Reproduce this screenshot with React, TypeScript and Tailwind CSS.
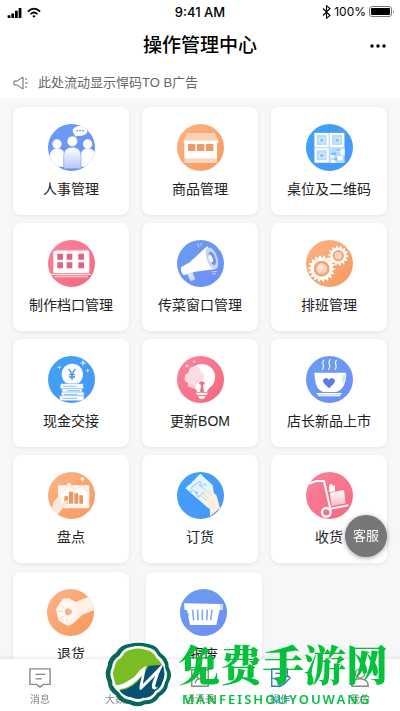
import type { ReactNode } from "react";

type Tone = "blue" | "sky" | "orange" | "pink";

const tones: Record<Tone, [string, string]> = {
  blue: ["#6a9df2", "#6f8ef8"],
  sky: ["#3fa2f8", "#4a96f6"],
  orange: ["#fbb384", "#f6995f"],
  pink: ["#fb829c", "#f4687f"],
};

function Disc({ id, tone, children }: { id: string; tone: Tone; children: ReactNode }) {
  const [from, to] = tones[tone];
  return (
    <svg viewBox="0 0 141 141" className="size-[47px] shrink-0" aria-hidden="true">
      <defs>
        <linearGradient id={id} x1="0" y1="0" x2="1" y2="1">
          <stop offset="0" stopColor={from} />
          <stop offset="1" stopColor={to} />
        </linearGradient>
        <clipPath id={id + "-clip"}>
          <circle cx="70.5" cy="70.5" r="70.5" />
        </clipPath>
      </defs>
      <circle cx="70.5" cy="70.5" r="70.5" fill={`url(#${id})`} />
      <g clipPath={`url(#${id}-clip)`}>{children}</g>
    </svg>
  );
}

function gearPath(cx: number, cy: number, outer: number, inner: number, teeth: number) {
  const points: string[] = [];
  for (let i = 0; i < teeth * 4; i++) {
    const angle = (i / (teeth * 4)) * Math.PI * 2;
    const r = i % 4 < 2 ? outer : inner;
    points.push(`${(cx + Math.cos(angle) * r).toFixed(1)},${(cy + Math.sin(angle) * r).toFixed(1)}`);
  }
  return points.join(" ");
}

const StaffIcon = () => (
  <Disc id="staff" tone="blue">
    <defs>
      <linearGradient id="staff-body" x1="0" y1="0" x2="0" y2="1">
        <stop offset="0" stopColor="#fff" />
        <stop offset="1" stopColor="#b5c6f7" />
      </linearGradient>
    </defs>
    <ellipse cx="96" cy="21" rx="22" ry="15" fill="#fff" />
    <path d="M83 28l-6 12 17-6z" fill="#fff" />
    <g fill="#5d8ae8">
      <circle cx="87" cy="20" r="2.5" />
      <circle cx="96" cy="20" r="2.5" />
      <circle cx="105" cy="20" r="2.5" />
    </g>
    <g fill="#fff">
      <circle cx="27" cy="60" r="14" />
      <circle cx="119" cy="60" r="14" />
      <path d="M5 128V98a23 23 0 0 1 46-4v34zM97 128V94a23 23 0 0 1 46 4v30z" />
    </g>
    <circle cx="73" cy="52" r="16" fill="#fff" stroke="#6c96f2" strokeWidth="2" />
    <path d="M47 134V96q0-26 26-26t26 26v38z" fill="url(#staff-body)" stroke="#7ba0f2" strokeWidth="2" />
  </Disc>
);

const ShopIcon = () => (
  <Disc id="shop" tone="orange">
    <path d="M30 27h84l10 24H20z" fill="#fbd0b3" />
    <path d="M20 50h104v6H20z" fill="#fff" />
    <path d="M22 54h98v50H22z" fill="#fff" />
    <path d="M20 50q7 12 13 0 7 12 13 0 7 12 13 0 7 12 13 0 7 12 13 0 7 12 13 0 7 12 13 0 7 12 13 0z" fill="#fff" />
    <path d="M33 60h22v21H33zM60 60h22v21H60zM87 60h22v21H87z" fill="#ef9b69" />
    <path d="M22 104h98v13H22z" fill="#fcd5bc" />
  </Disc>
);

const QrIcon = () => (
  <Disc id="qr" tone="sky">
    <path d="M25 26h91v91H25z" fill="#b9dbfc" />
    <g fill="none" stroke="#fff" strokeWidth="6">
      <path d="M29 30h36v36H29zM75 30h36v36H75zM29 76h36v36H29z" />
    </g>
    <path d="M41 42h13v13H41zM87 42h13v13H87zM41 88h13v13H41z" fill="#8cc4fb" stroke="#e5f2ff" strokeWidth="3" />
    <path d="M74 73h18v10h12v11h12V74h-10v8h-8v-9zM74 94h10v8h-10zM94 97h16v12H94zM75 108h13v8H75z" fill="#fff" />
    <path d="M92 74h8v6h-8zM76 86h14v6H76zM86 103h8v6h-8z" fill="#6fb6fa" />
  </Disc>
);

const StallIcon = () => (
  <Disc id="stall" tone="pink">
    <path d="M22 29h99v6H22z" fill="#fdb9c6" />
    <rect x="16" y="33" width="108" height="66" rx="3" fill="#fff" />
    <path d="M28 41h17v18H28zM56 41h17v18H56zM91 41h17v18H91zM28 67h17v18H28zM56 67h17v18H56zM91 67h17v18H91z" fill="#e0637e" />
    <path d="M9 101h120v4H9z" fill="#fde2e7" />
    <path d="M20 107h100v5H20z" fill="#fdc5cf" />
  </Disc>
);

const HornIcon = () => (
  <Disc id="horn" tone="blue">
    <path d="M12 82l32-12 12 24-9 4 8 20-14 6-10-21-10 3q-10-9-9-24z" fill="#d6e2fc" />
    <path d="M12 82l28-16 14 28-34 11q-9-9-8-23z" fill="#fff" />
    <path d="M39 66l52-48 26 69-64 8z" fill="#fff" />
    <ellipse cx="105" cy="55" rx="16" ry="34" transform="rotate(-19 105 55)" fill="#c8d4f5" />
    <ellipse cx="106" cy="55" rx="9" ry="21" transform="rotate(-19 106 55)" fill="#7592e4" />
    <ellipse cx="101" cy="56" rx="6" ry="12" transform="rotate(-19 101 56)" fill="#eef3ff" />
    <path d="M66 22l-4-11M73 17l-1-8M104 96l16-2M106 102l11-1" stroke="#dce7ff" strokeWidth="2.5" />
  </Disc>
);

const GearsIcon = () => (
  <Disc id="gears" tone="orange">
    <polygon points={gearPath(97, 47, 30, 24, 14)} fill="#fff" />
    <circle cx="97" cy="47" r="17" fill="#f6a473" />
    <circle cx="97" cy="47" r="11" fill="#fcd2b8" />
    <polygon points={gearPath(47, 86, 40, 33, 18)} fill="#fff" />
    <circle cx="47" cy="86" r="24" fill="#f6a473" />
    <circle cx="47" cy="86" r="16" fill="#fcd2b8" />
    <circle cx="44" cy="82" r="8" fill="#fee9dc" />
  </Disc>
);

const CashIcon = () => (
  <Disc id="cash" tone="sky">
    <circle cx="73" cy="55" r="32" fill="#fff" />
    <path d="M62 39l10 15 10-15M72 54v18M63 56h18M63 63h18" fill="none" stroke="#3d8ee6" strokeWidth="4" />
    <g fill="#fff" stroke="#69b1f8" strokeWidth="2">
      <rect x="37" y="83" width="69" height="16" rx="3" />
      <rect x="42" y="98" width="60" height="13" rx="3" />
      <rect x="40" y="108" width="68" height="13" rx="3" />
      <rect x="35" y="119" width="73" height="15" rx="3" />
    </g>
    <path d="M46 91h40M58 104h38M48 115h40M44 127h44" stroke="#69b1f8" strokeWidth="2.5" />
    <path d="M34 26l2 6 6 2-6 2-2 6-2-6-6-2 6-2zM105 10l3 8 8 3-8 3-3 8-3-8-8-3 8-3zM119 36l2 6 5 2-5 2-2 6-2-6-5-2 5-2z" fill="#bfe0ff" />
  </Disc>
);

const RecipeIcon = () => (
  <Disc id="recipe" tone="pink">
    <path d="M76 24a39 39 0 0 1 22 71q-7 6-8 13H60q-1-8-8-13a39 39 0 0 1 24-71z" fill="#fff" />
    <path d="M23 72q-3-18 12-22 0-18 17-19 17 0 18 15 16 8 9 24-5 9-17 9l-8 19-22-7 1-12q-9 2-10-7z" fill="#fbdce1" />
    <path d="M34 86l21 7" stroke="#f5a9b8" strokeWidth="2" />
    <path d="M70 78q4-5 10 0 5 1 3 6l-5 3 3 21H69l3-21-6-4q0-5 4-5z" fill="#ec7087" />
    <path d="M57 110h35l-3 7H60zM63 120h23l-5 8H68z" fill="#fff" />
    <path d="M30 22l2 6 6 2-6 2-2 6-2-6-6-2 6-2zM51 11l2 4 4 2-4 2-2 4-2-4-4-2 4-2z" fill="#fed0da" />
  </Disc>
);

const CupIcon = () => (
  <Disc id="cup" tone="blue">
    <g fill="none" stroke="#e2ecff" strokeWidth="4" strokeLinecap="round">
      <path d="M53 13c-10 10 7 14-4 27M72 11c-10 12 7 16-4 30M91 13c-10 10 7 14-4 27" />
    </g>
    <path d="M25 50h92q5 0 3 13-2 27-18 39-6 5-12 6H51q-21-9-24-37z" fill="#fff" />
    <path d="M107 58h12q-1 20-11 25z" fill="#dbe7ff" />
    <path d="M69 97L55 83q-8-9 0-15 8-5 14 3 6-8 14-3 8 6 0 15z" fill="#5e7ddd" />
    <path d="M31 111h77l-6 10H38z" fill="#fff" />
    <path d="M38 116h67" stroke="#a7bdf8" strokeWidth="2" />
  </Disc>
);

const CountIcon = () => (
  <Disc id="count" tone="orange">
    <rect x="30" y="40" width="94" height="69" rx="3" fill="#fff3eb" />
    <path d="M41 50h76v48H41z" fill="#fff" />
    <path d="M49 73h11v22H49zM63 59h13v36H63zM79 64h12v31H79zM94 70h11v25H94z" fill="#ee965e" />
    <path d="M43 62l20-24 18 16 20-17 15 20" fill="none" stroke="#f6c7a8" strokeWidth="2" />
    <circle cx="63" cy="38" r="6" fill="#fff3eb" />
    <path d="M13 103q4-23 20-28 13-1 5 13l-1 8 20-12q9 1-1 10l-18 22q-5 9-15 17L9 116z" fill="#ffe7d7" />
    <path d="M103 14l3 5 5 2-5 2-3 6-3-6-5-2 5-2z" fill="#fff" />
    <circle cx="33" cy="35" r="2" fill="#ffe2cf" />
  </Disc>
);

const OrderIcon = () => (
  <Disc id="order" tone="sky">
    <path d="M25 49L70 5l37 35 8 52-19 18z" fill="#e5f3ff" />
    <path d="M42 49q17-17 28-20 3 18 16 26-11 10-22 20-4-14-22-26z" fill="none" stroke="#8fc6fa" strokeWidth="3" />
    <path d="M37 38l8-8M47 27l8-6M38 55l6 5M55 60l8 3M65 38l8 6M81 35l7 6" stroke="#65b1f7" strokeWidth="3" />
    <path d="M84 62q-8-9 0-12 9 7 17 13 10-4 18 8l10 38-30 24q1-20-3-33-21-9-24-18 9-4 20 3z" fill="#fff0dc" />
    <path d="M82 51l22 20M76 62l21 19M72 72l18 14" stroke="#b8cbd5" strokeWidth="2" />
  </Disc>
);

const CartIcon = () => (
  <Disc id="cart" tone="pink">
    <defs>
      <linearGradient id="cart-box" x1="0" y1="0" x2="0" y2="1">
        <stop offset="0" stopColor="#fff" />
        <stop offset="1" stopColor="#fdb7c5" />
      </linearGradient>
    </defs>
    <path d="M72 62l42-8 5 40-42 8z" fill="url(#cart-box)" />
    <path d="M70 60V38l7-3 4 8 6-5v20z" fill="#fff" />
    <path d="M6 36l25-9h23l18 80" fill="none" stroke="#fff" strokeWidth="6" strokeLinejoin="round" />
    <path d="M70 111l57-11" stroke="#fff" strokeWidth="6" />
    <circle cx="61" cy="121" r="13" fill="#f57088" stroke="#fff" strokeWidth="7" />
  </Disc>
);

const ReturnIcon = () => (
  <Disc id="return" tone="orange">
    <path d="M86 39l42-17 20 6v32l-42 17-27 26-15 8-14-7-15-9-5-17-3-17 11-19 10-13 18-2 8 5z" fill="#fff1e6" />
    <path d="M40 50q20-24 31-9 13-1 10 12 18 10 2 22 0 17-17 18-15 9-22-7-17-6-7-17-9-12 3-19z" fill="#fff8f2" />
    <path d="M68 59q-15-4-14 10 2 15 15 8 13-9-1-18z" fill="#f5b48c" />
    <path d="M43 51l9 6M34 67h13M40 89l10-7M58 98l3-10" stroke="#f8c5a4" strokeWidth="2" />
  </Disc>
);

const BasketIcon = () => (
  <Disc id="basket" tone="blue">
    <path d="M12 43l115 2 2 17h-10l-10 46H30l-9-45h-7z" fill="#fff" />
    <path d="M118 46h12l-1 15h-8z" fill="#cbd9fc" />
    <path d="M38 62l3 32M53 62l1 32M67 62v32M82 62l-2 32M96 62l-4 32" stroke="#8da9f1" strokeWidth="5" />
    <path d="M25 72l1 11" stroke="#a7bcf4" strokeWidth="3" />
  </Disc>
);

type Entry = { label: string; Icon: () => ReactNode };

const mainEntries: Entry[] = [
  { label: "人事管理", Icon: StaffIcon },
  { label: "商品管理", Icon: ShopIcon },
  { label: "桌位及二维码", Icon: QrIcon },
  { label: "制作档口管理", Icon: StallIcon },
  { label: "传菜窗口管理", Icon: HornIcon },
  { label: "排班管理", Icon: GearsIcon },
  { label: "现金交接", Icon: CashIcon },
  { label: "更新BOM", Icon: RecipeIcon },
  { label: "店长新品上市", Icon: CupIcon },
  { label: "盘点", Icon: CountIcon },
  { label: "订货", Icon: OrderIcon },
  { label: "收货", Icon: CartIcon },
];

const extraEntries: Entry[] = [
  { label: "退货", Icon: ReturnIcon },
  { label: "报废", Icon: BasketIcon },
];

function Card({ label, Icon }: Entry) {
  return (
    <button
      type="button"
      className="flex h-[108px] w-full flex-col items-center gap-[6px] rounded-lg bg-white pt-[17px] text-sm leading-6 text-[#222] shadow-[0_1px_4px_rgba(0,0,0,0.08)]"
    >
      <Icon />
      <span>{label}</span>
    </button>
  );
}

const tabs: { label: string; drawing: ReactNode; active?: boolean }[] = [
  {
    label: "消息",
    drawing: <path d="M1 2h22v17h-7l-4 3-4-3H1zM7 8h11M7 13h7" />,
  },
  {
    label: "大数据",
    drawing: <path d="M3 21V10h4v11M10 21V4h4v17M17 21V7h4v14" />,
  },
  {
    label: "通讯录",
    drawing: <path d="M3 3h18v18H3zM7 18q0-5 5-5t5 5M12 13a3 3 0 1 0 0-6 3 3 0 0 0 0 6" />,
  },
  {
    label: "操作",
    active: true,
    drawing: <path d="M20 8V2H3v19h9M7 7h9M7 12h5M12 21l1-5 7-7 3 3-7 7z" />,
  },
  {
    label: "我的",
    drawing: <path d="M12 12a5 5 0 1 0 0-10 5 5 0 0 0 0 10zM3 21q0-8 9-8t9 8z" />,
  },
];

function StatusBar() {
  return (
    <div className="grid h-6 grid-cols-3 items-center px-[7px] font-['Inter',sans-serif] text-black">
      <div className="flex items-center gap-1">
        <svg viewBox="0 0 16 12" className="h-[11px] w-4" aria-hidden="true">
          <path d="M0 9h3v3H0zM4 7h3v5H4zM8 4h3v8H8zM12 1h3v11h-3z" />
        </svg>
        <svg viewBox="0 0 16 12" className="h-[11px] w-[14px]" fill="none" stroke="currentColor" strokeWidth="2" aria-hidden="true">
          <path d="M1 5q7-7 14 0M4 8q4-4 8 0" />
          <path d="M6 10q2-1.500 4 0l-2 2z" fill="currentColor" stroke="none" />
        </svg>
      </div>
      <div className="text-center text-[13px] leading-6 font-medium">9:41 AM</div>
      <div className="-mr-0.5 flex items-center justify-end gap-[3px] text-xs leading-6">
        <svg viewBox="0 0 10 16" className="h-[14px] w-[9px]" fill="none" stroke="currentColor" strokeWidth="1.3" aria-hidden="true">
          <path d="M1 4l8 8-4 3V1l4 3-8 8" />
        </svg>
        <span>100%</span>
        <svg viewBox="0 0 26 12" className="h-3 w-[26px]" aria-hidden="true">
          <rect x="0.5" y="0.500" width="22" height="10" rx="2.500" fill="none" stroke="#777" />
          <rect x="2" y="2" width="19" height="7" rx="1" />
          <path d="M24 4q2 1.500 0 3z" fill="#777" />
        </svg>
      </div>
    </div>
  );
}

function SiteMark() {
  return (
    <div className="pointer-events-none absolute right-3 bottom-1 flex items-center gap-[6px]">
      <svg viewBox="312 224 200 194" className="h-[65px] w-[67px]" aria-hidden="true">
        <path
          d="M384 230q28-8 57 0 26 3 37 27 25 17 24 42 15 23-1 49-3 26-26 38-16 26-43 24-22 12-49-1-27-2-38-25-24-15-25-41-12-23 0-48 1-25 24-38 15-26 40-27z"
          fill="#08665a"
        />
        <path
          d="M387 240q25-8 50 0 24 3 34 25 21 16 21 38 11 19-1 41-4 22-24 33-14 23-38 21-18 10-41-1-24-2-34-22-20-14-21-36-10-19 0-40 2-22 22-34 12-23 32-25z"
          fill="#fff"
        />
        <path
          d="M389 247q23-7 44 0 23 4 32 24 19 15 20 33 9 17-1 37-4 19-22 29-13 22-34 20-17 9-37-1-22-1-31-20-18-13-20-31-8-17 0-37 2-20 21-31 11-21 28-23z"
          fill="#79bd22"
        />
        <path d="M355 369q39-4 68-43l20-31 42-3q9 33-1 49-4 19-22 29-13 22-34 20-17 9-37-1-23-2-36-20z" fill="#075174" />
        <path d="M331 348q12 10 38-1l29-17 18-22 19-14-10 55 43-44q11-11 20-18-19 38-26 67 1 12 13-1-17 21-23 7-2-10 10-35l-41 41q-9 4-5-14l6-29q-27 32-55 40-24 5-36-15z" fill="#fff" />
      </svg>
      <div className="flex flex-col gap-[6px] text-[#04c13c]">
        <div className="font-['Noto_Serif_CJK_SC','Noto_Sans_CJK_SC',sans-serif] text-[42px] leading-[44px] font-black">免费手游网</div>
        <div className="pl-1 font-['Noto_Sans',sans-serif] text-[13px] leading-4 font-semibold tracking-[2px]">MANFEISHOUYOUWANG</div>
      </div>
    </div>
  );
}

export default function App() {
  return (
    <div className="relative flex h-screen flex-col overflow-hidden bg-white font-['Liberation_Sans','Noto_Sans_CJK_SC',sans-serif]">
      <header>
        <StatusBar />
        <div className="grid h-11 grid-cols-[40px_1fr_40px] items-center">
          <h1 className="col-start-2 text-center text-[19px] leading-7 font-medium text-black">操作管理中心</h1>
          <button type="button" aria-label="更多" className="flex h-8 items-center justify-center pr-1">
            <svg viewBox="0 0 16 4" className="h-1 w-4" aria-hidden="true">
              <circle cx="2" cy="2" r="1.700" />
              <circle cx="8" cy="2" r="1.700" />
              <circle cx="14" cy="2" r="1.700" />
            </svg>
          </button>
        </div>
        <div className="flex h-[30px] items-center gap-[9px] px-[13px] text-[13px] leading-5 text-[#666]">
          <svg viewBox="0 0 16 14" className="h-[14px] w-4" fill="none" stroke="currentColor" aria-hidden="true">
            <path d="M1 5v4h3l6 4V1L4 5zM12 3h2M12 7h3M12 11h2" />
          </svg>
          <span>此处流动显示悍码TO B广告</span>
        </div>
      </header>

      <main className="min-h-0 flex-1 overflow-y-auto bg-[#f7f7f7] px-[13px] pt-[9px] [scrollbar-width:none]">
        <div className="grid grid-cols-3 gap-x-[13px] gap-y-2">
          {mainEntries.map((item) => (
            <Card key={item.label} {...item} />
          ))}
        </div>
        <div className="mt-[9px] flex gap-[17px] pb-4">
          {extraEntries.map((item) => (
            <div key={item.label} className="w-[calc((100%-26px)/3)]">
              <Card {...item} />
            </div>
          ))}
        </div>
      </main>

      <nav className="z-10 grid h-[52px] shrink-0 grid-cols-5 bg-white shadow-[0_-1px_4px_rgba(0,0,0,0.1)]">
        {tabs.map((tab) => (
          <a
            key={tab.label}
            href="#"
            className={`flex flex-col items-center gap-[3px] pt-2 text-[10px] leading-4 ${tab.active ? "text-[#3b6fc4]" : "text-[#888]"}`}
          >
            <svg viewBox="0 0 24 24" className="size-[22px]" fill="none" stroke="currentColor" strokeWidth="1.500" aria-hidden="true">
              {tab.drawing}
            </svg>
            {tab.label}
          </a>
        ))}
      </nav>

      <button
        type="button"
        className="absolute right-[13px] bottom-[154px] z-10 size-[42px] rounded-full bg-[#777] text-[13px] text-white shadow-[0_1px_5px_rgba(0,0,0,0.35)]"
      >
        客服
      </button>

      <div className="absolute inset-x-0 bottom-0 z-20">
        <SiteMark />
      </div>
    </div>
  );
}
